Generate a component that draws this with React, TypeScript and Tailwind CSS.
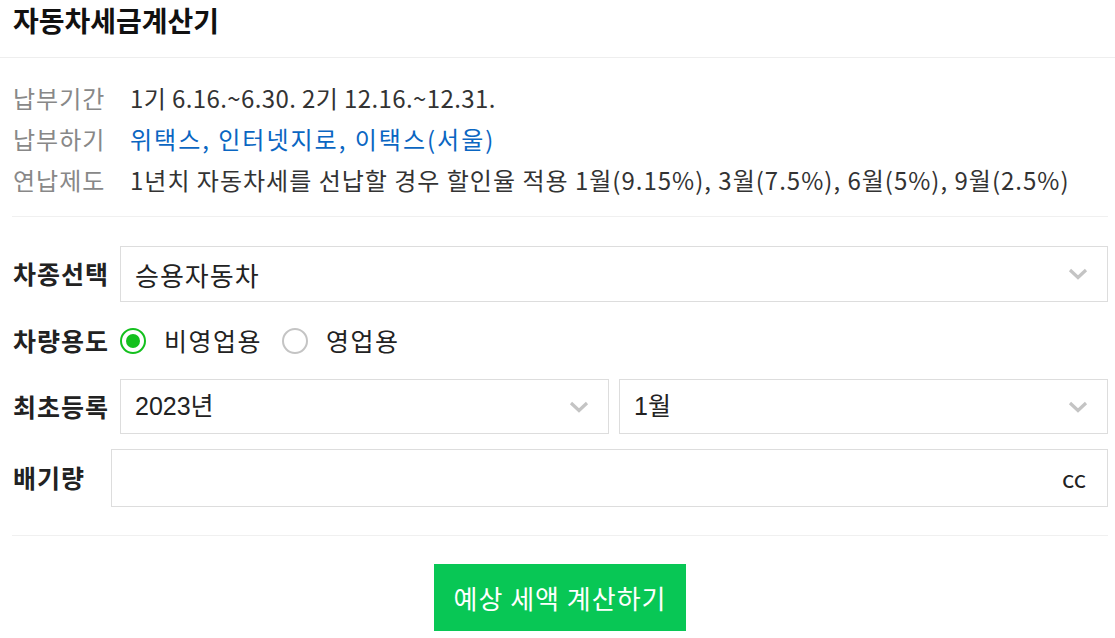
const KR = "font-['Noto_Sans_CJK_KR',sans-serif]";

function Chevron() {
  return (
    <svg width="20" height="12" viewBox="0 0 20 12" className="shrink-0">
      <path d="M2 2 L10 9.5 L18 2" fill="none" stroke="#c4c4c4" strokeWidth="3.2" />
    </svg>
  );
}

function Select({ value, className, mono }: { value: string; className?: string; mono?: boolean }) {
  return (
    <div
      className={
        'flex items-center justify-between border border-[#dddddd] bg-white pl-[14px] pr-[19px] ' + (className ?? '')
      }
    >
      {mono ? (
        <span className="font-['Liberation_Sans','Noto_Sans_CJK_KR',sans-serif] text-[25px] text-[#222222]">
          {value}
        </span>
      ) : (
        <span className="text-[26px] tracking-[1px] text-[#222222]">{value}</span>
      )}
      <Chevron />
    </div>
  );
}

function Radio({ checked, label }: { checked?: boolean; label: string }) {
  return (
    <label className="flex items-center">
      {checked ? (
        <span className="flex h-[26px] w-[26px] items-center justify-center rounded-full border-2 border-[#14c01e]">
          <span className="h-[14px] w-[14px] rounded-full bg-[#14c01e]" />
        </span>
      ) : (
        <span className="h-[26px] w-[26px] rounded-full border-2 border-[#c4c4c4]" />
      )}
      <span className="ml-[18px] text-[25px] tracking-[1.5px] text-[#222222]">{label}</span>
    </label>
  );
}

export default function App() {
  const info = [
    {
      label: '납부기간',
      value: <span className="tracking-[0.4px]">1기 6.16.~6.30. 2기 12.16.~12.31.</span>,
    },
    {
      label: '납부하기',
      value: <span className="tracking-[2px] text-[#0a66c2]">위택스, 인터넷지로, 이택스(서울)</span>,
    },
    {
      label: '연납제도',
      value: <span>1년치 자동차세를 선납할 경우 할인율 적용 1월(9.15%), 3월(7.5%), 6월(5%), 9월(2.5%)</span>,
    },
  ];

  return (
    <div className={'min-h-screen bg-white ' + KR}>
      <header className="h-[58px] border-b border-[#eeeeee] pl-[13px]">
        <h1 className="pt-[2px] text-[28px] font-bold leading-[36px] text-[#111111]">자동차세금계산기</h1>
      </header>

      <div className="pl-[12px] pr-[7px]">
        <section className="border-b border-[#f0f0f0] pb-[16px] pt-[19px]">
          {info.map((row) => (
            <div key={row.label} className="flex text-[24px] leading-[41px] tracking-[1px]">
              <span className="w-[118px] shrink-0 pl-[1px] text-[#888888]">{row.label}</span>
              <span className="text-[#333333]">{row.value}</span>
            </div>
          ))}
        </section>

        <section className="flex flex-col gap-[15px] border-b border-[#f0f0f0] pb-[28px] pt-[29px]">
          <div className="flex items-center">
            <span className="w-[108px] shrink-0 pl-[1px] text-[25px] font-bold tracking-[1px] text-[#222222]">
              차종선택
            </span>
            <Select value="승용자동차" className="h-[56px] flex-1" />
          </div>

          <div className="flex h-[47px] items-center">
            <span className="w-[108px] shrink-0 pl-[1px] text-[25px] font-bold tracking-[1px] text-[#222222]">
              차량용도
            </span>
            <div className="flex items-center gap-[20px]">
              <Radio checked label="비영업용" />
              <Radio label="영업용" />
            </div>
          </div>

          <div className="flex items-center">
            <span className="w-[108px] shrink-0 pl-[1px] text-[25px] font-bold tracking-[1px] text-[#222222]">
              최초등록
            </span>
            <div className="flex flex-1 gap-[10px]">
              <Select mono value="2023년" className="h-[55px] flex-1" />
              <Select mono value="1월" className="h-[55px] flex-1" />
            </div>
          </div>

          <div className="flex items-center">
            <span className="w-[99px] shrink-0 pl-[1px] text-[25px] font-bold tracking-[1px] text-[#222222]">
              배기량
            </span>
            <div className="flex h-[58px] flex-1 items-center justify-end border border-[#dddddd] pr-[21px]">
              <span className="text-[24px] text-[#222222]">cc</span>
            </div>
          </div>
        </section>

        <div className="flex justify-center pt-[28px]">
          <button className="h-[67px] w-[252px] bg-[#08c755] text-[26px] tracking-[1px] text-white">
            예상 세액 계산하기
          </button>
        </div>
      </div>
    </div>
  );
}
